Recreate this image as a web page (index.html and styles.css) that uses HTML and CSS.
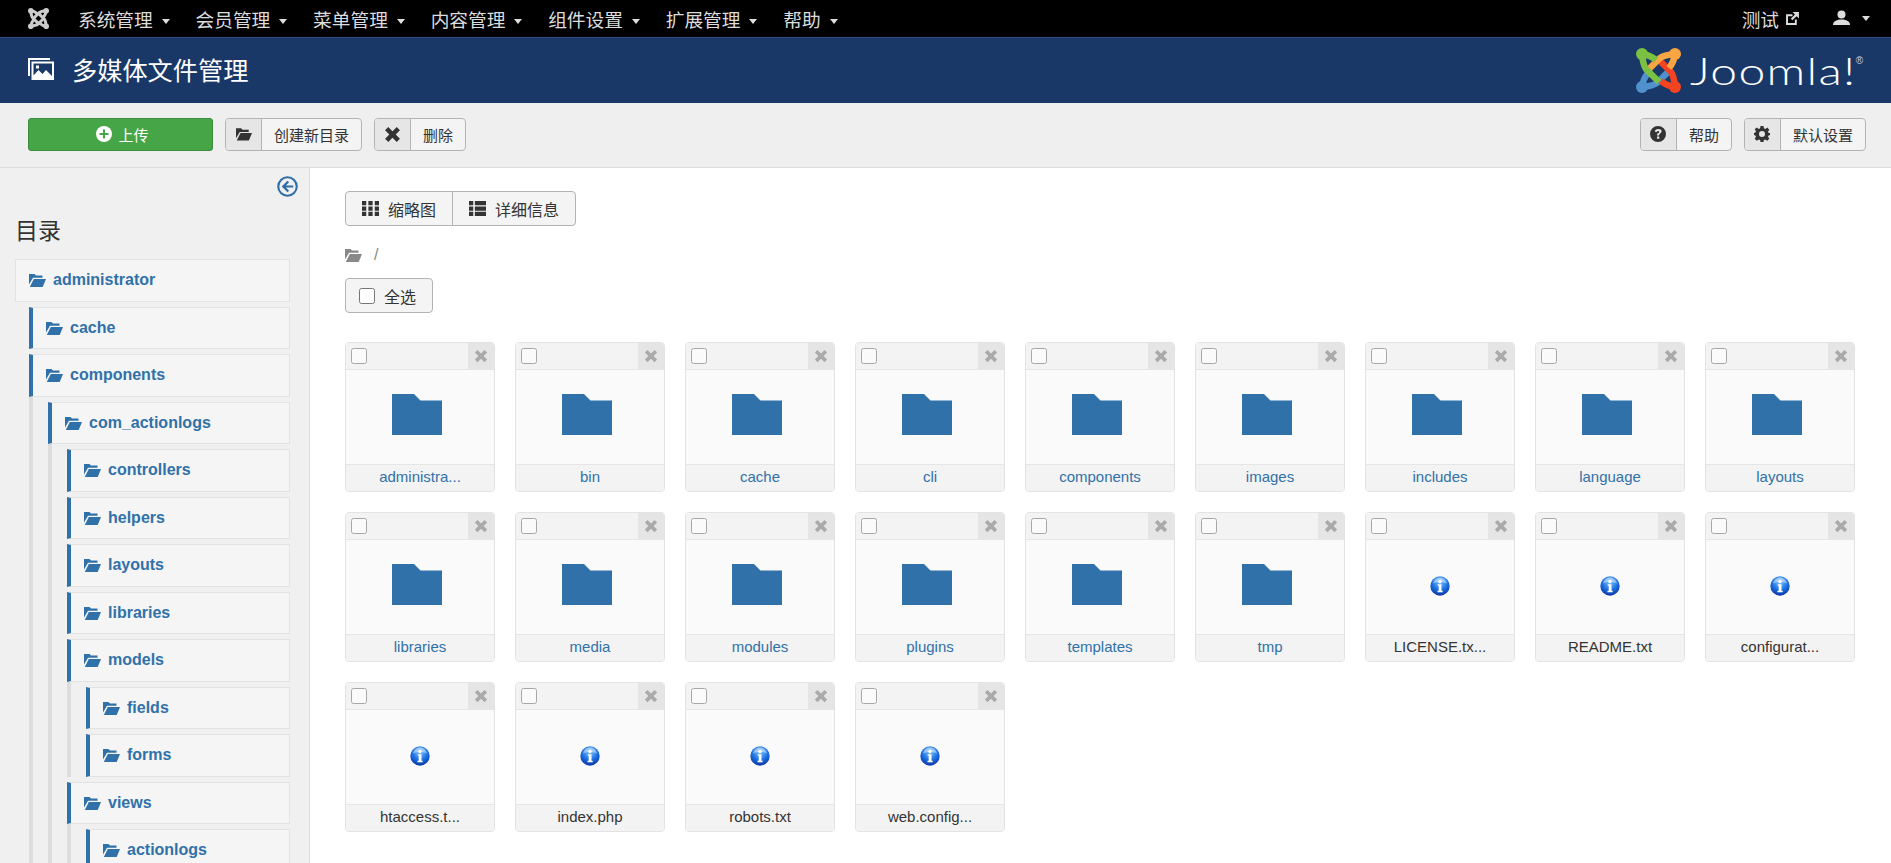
FILE: index.html
```html
<!DOCTYPE html>
<html>
  <head>
    <meta charset="utf-8" />
    <title>多媒体文件管理</title>
    <link rel="stylesheet" href="styles.css">
  </head>

  <body>
    <svg class="defs" width="0" height="0">
      <defs>
        <symbol id="i-folder-open" viewBox="0 0 17 14">
          <path d="M0 1h5.500l1.500 1.500h6.500v2.300H4L0 11.500z"/>
          <path d="M4.800 6H17l-3.300 8H.8z"/>
        </symbol>
        <symbol id="i-times" viewBox="0 0 16 16">
          <path d="M1 4l3-3 4 4 4-4 3 3-4 4 4 4-3 3-4-4-4 4-3-3 4-4z"/>
        </symbol>
        <symbol id="i-folder-big" viewBox="0 0 50 41">
          <path d="M0 0h22l6.500 6.500H50V41H0z"/>
        </symbol>
        <symbol id="i-joomla-arm" viewBox="0 0 45 45">
          <path d="M23 34L10 21Q7 17 6 6Q14 7 20 12" fill="none" stroke="currentColor" stroke-width="6.500"/>
          <circle cx="6" cy="6" r="6" fill="currentColor"/>
        </symbol>
        <radialGradient id="info-grad" cx="50%" cy="30%" r="75%">
          <stop offset="0" stop-color="#7cc4ff"/>
          <stop offset=".55" stop-color="#1a6fe0"/>
          <stop offset="1" stop-color="#0a2a9c"/>
        </radialGradient>
        <symbol id="i-info" viewBox="0 0 20 20">
          <circle cx="10" cy="10" r="9.700" fill="url(#info-grad)"/>
          <path d="M3 7.500C4 3.500 7 1.500 10 1.500s6 2 7 6c-4-2-10-2-14 0z" fill="#fff" opacity=".45"/>
          <circle cx="10" cy="5.500" r="1.700" fill="#fff"/>
          <path d="M7.800 8.300h3.700v6.500h1.200v1.400H7.500v-1.400h1.200V9.700h-.9z" fill="#fff"/>
        </symbol>
      </defs>
    </svg>

    <nav class="topbar">
      <svg class="nav-logo" viewBox="0 0 45 45">
        <use href="#i-joomla-arm"/>
        <use href="#i-joomla-arm" transform="rotate(90 22.500 22.500)"/>
        <use href="#i-joomla-arm" transform="rotate(180 22.500 22.500)"/>
        <use href="#i-joomla-arm" transform="rotate(270 22.500 22.500)"/>
      </svg>
      <ul class="menu">
        <li>系统管理<span class="caret"></span></li>
        <li>会员管理<span class="caret"></span></li>
        <li>菜单管理<span class="caret"></span></li>
        <li>内容管理<span class="caret"></span></li>
        <li>组件设置<span class="caret"></span></li>
        <li>扩展管理<span class="caret"></span></li>
        <li>帮助<span class="caret"></span></li>
      </ul>
      <div class="nav-right">
        <span class="site-link">测试
          <svg class="ext-icon" viewBox="0 0 14 14">
            <path d="M1 3h6v1.800H2.800v6.400h6.400V8H11v5H1z"/>
            <path d="M7 1h6v6l-2.200-2.200-3.900 3.900-1.500-1.500 3.900-3.900z"/>
          </svg>
        </span>
        <span class="user-link">
          <svg class="user-icon" viewBox="0 0 17 16">
            <circle cx="8.500" cy="4.500" r="4"/>
            <path d="M0 15c0-3.500 3-4.500 6-5.500h5c3 1 6 2 6 5.500z"/>
          </svg>
          <span class="caret"></span>
        </span>
      </div>
    </nav>

    <header class="titlebar">
      <svg class="title-icon" viewBox="0 0 26 22" fill="#fff">
        <path d="M0 0h22v2H2v16H0z"/>
        <path fill-rule="evenodd" d="M3.500 3.500H26V22H3.500zM5.500 5.500v12l5-5.500 4 4 3.500-4 6 6V5.500zM8 7.500h3v3H8z"/>
      </svg>
      <h1>多媒体文件管理</h1>
      <div class="brand">
        <svg class="brand-mark" viewBox="0 0 45 45">
          <use href="#i-joomla-arm" class="arm-blue" transform="rotate(270 22.500 22.500)"/>
          <use href="#i-joomla-arm" class="arm-red" transform="rotate(180 22.500 22.500)"/>
          <use href="#i-joomla-arm" class="arm-orange" transform="rotate(90 22.500 22.500)"/>
          <use href="#i-joomla-arm" class="arm-green"/>
        </svg>
        <span class="brand-name">Joomla!</span><span class="brand-reg">®</span>
      </div>
    </header>

    <div class="toolbar">
      <button class="btn-upload">
        <svg class="plus-icon" viewBox="0 0 16 16">
          <circle cx="8" cy="8" r="8" fill="#fff"/>
          <path d="M7 3.500h2V7h3.500v2H9v3.500H7V9H3.500V7H7z" fill="#46a546"/>
        </svg>
        上传
      </button>
      <button class="btn"><span class="btn-icon"><svg class="ico-folder"><use href="#i-folder-open"/></svg></span><span class="btn-text">创建新目录</span></button>
      <button class="btn"><span class="btn-icon"><svg class="ico-times"><use href="#i-times"/></svg></span><span class="btn-text">删除</span></button>
      <div class="toolbar-right">
        <button class="btn"><span class="btn-icon">
          <svg class="ico-help" viewBox="0 0 16 16">
            <path fill-rule="evenodd" d="M8 0a8 8 0 110 16A8 8 0 018 0zM7 10.500v2.300h2.300v-2.300zM8.200 3C6.300 3 5 4 4.800 5.800l2.100.3c.1-.8.500-1.200 1.200-1.200.7 0 1.100.4 1.100 1 0 .5-.3.800-.9 1.300C7.400 7 7 7.700 7 9.400h2.200c0-.9.200-1.200.9-1.800.9-.7 1.500-1.400 1.500-2.500C11.600 3.900 10.300 3 8.200 3z"/>
          </svg></span><span class="btn-text">帮助</span></button>
        <button class="btn"><span class="btn-icon">
          <svg class="ico-gear" viewBox="0 0 16 16">
            <path fill-rule="evenodd" d="M6.500 0h3l.4 2.300 1.300.6L13.200 1.600l2.100 2.100L14 5.700l.6 1.300L16 7v2l-1.400.4-.6 1.300 1.300 2-2.100 2.100-2-1.300-1.300.5L9.500 16h-3l-.4-2-1.300-.5-2 1.300L.7 12.700l1.300-2-.6-1.300L0 9V7l1.400-.4.600-1.300-1.300-2L2.800 1.600l2 1.300 1.300-.6zM8 5a3 3 0 100 6 3 3 0 000-6z"/>
          </svg></span><span class="btn-text">默认设置</span></button>
      </div>
    </div>

    <div class="page">
      <aside class="sidebar">
        <div class="collapse-row">
          <svg class="collapse-icon" viewBox="0 0 20 20">
            <circle cx="10" cy="10" r="8.800" fill="none" stroke="#2f6ea8" stroke-width="2"/>
            <path d="M10 4.500l1.500 1.500-3 3H15.500v2H8.500l3 3L10 15.500 4.500 10z" fill="#2f6ea8"/>
          </svg>
        </div>
        <h3 class="tree-title">目录</h3>
        <ul class="tree">
          <li>
            <a class="node node-root"><svg class="ico-node"><use href="#i-folder-open"/></svg>administrator</a>
            <ul class="tree sub-first">
              <li><a class="node"><svg class="ico-node"><use href="#i-folder-open"/></svg>cache</a></li>
              <li>
                <a class="node"><svg class="ico-node"><use href="#i-folder-open"/></svg>components</a>
                <ul class="tree sub">
                  <li>
                    <a class="node"><svg class="ico-node"><use href="#i-folder-open"/></svg>com_actionlogs</a>
                    <ul class="tree sub">
                      <li><a class="node"><svg class="ico-node"><use href="#i-folder-open"/></svg>controllers</a></li>
                      <li><a class="node"><svg class="ico-node"><use href="#i-folder-open"/></svg>helpers</a></li>
                      <li><a class="node"><svg class="ico-node"><use href="#i-folder-open"/></svg>layouts</a></li>
                      <li><a class="node"><svg class="ico-node"><use href="#i-folder-open"/></svg>libraries</a></li>
                      <li>
                        <a class="node"><svg class="ico-node"><use href="#i-folder-open"/></svg>models</a>
                        <ul class="tree sub">
                          <li><a class="node"><svg class="ico-node"><use href="#i-folder-open"/></svg>fields</a></li>
                          <li><a class="node"><svg class="ico-node"><use href="#i-folder-open"/></svg>forms</a></li>
                        </ul>
                      </li>
                      <li>
                        <a class="node"><svg class="ico-node"><use href="#i-folder-open"/></svg>views</a>
                        <ul class="tree sub">
                          <li><a class="node"><svg class="ico-node"><use href="#i-folder-open"/></svg>actionlogs</a></li>
                        </ul>
                      </li>
                    </ul>
                  </li>
                </ul>
              </li>
            </ul>
          </li>
        </ul>
      </aside>

      <main class="content">
        <div class="view-switch">
          <button class="view-btn">
            <svg class="ico-grid" viewBox="0 0 16 14">
              <path d="M0 0h4v4H0zM6 0h4v4H6zM12 0h4v4h-4zM0 5h4v4H0zM6 5h4v4H6zM12 5h4v4h-4zM0 10h4v4H0zM6 10h4v4H6zM12 10h4v4h-4z"/>
            </svg>
            缩略图
          </button>
          <button class="view-btn">
            <svg class="ico-grid" viewBox="0 0 16 14">
              <path d="M0 0h4v4H0zM5.500 0H16v4H5.500zM0 5h4v4H0zM5.500 5H16v4H5.500zM0 10h4v4H0zM5.500 10H16v4H5.500z"/>
            </svg>
            详细信息
          </button>
        </div>
        <div class="breadcrumb"><svg class="ico-crumb"><use href="#i-folder-open"/></svg><span>/</span></div>
        <label class="select-all"><input type="checkbox" /> 全选</label>

        <div class="cards">
          <div class="card"><div class="card-head"><input type="checkbox" /><span class="card-del"><svg><use href="#i-times"/></svg></span></div><div class="card-body"><svg class="big-folder"><use href="#i-folder-big"/></svg></div><div class="card-foot">administra...</div></div>
          <div class="card"><div class="card-head"><input type="checkbox" /><span class="card-del"><svg><use href="#i-times"/></svg></span></div><div class="card-body"><svg class="big-folder"><use href="#i-folder-big"/></svg></div><div class="card-foot">bin</div></div>
          <div class="card"><div class="card-head"><input type="checkbox" /><span class="card-del"><svg><use href="#i-times"/></svg></span></div><div class="card-body"><svg class="big-folder"><use href="#i-folder-big"/></svg></div><div class="card-foot">cache</div></div>
          <div class="card"><div class="card-head"><input type="checkbox" /><span class="card-del"><svg><use href="#i-times"/></svg></span></div><div class="card-body"><svg class="big-folder"><use href="#i-folder-big"/></svg></div><div class="card-foot">cli</div></div>
          <div class="card"><div class="card-head"><input type="checkbox" /><span class="card-del"><svg><use href="#i-times"/></svg></span></div><div class="card-body"><svg class="big-folder"><use href="#i-folder-big"/></svg></div><div class="card-foot">components</div></div>
          <div class="card"><div class="card-head"><input type="checkbox" /><span class="card-del"><svg><use href="#i-times"/></svg></span></div><div class="card-body"><svg class="big-folder"><use href="#i-folder-big"/></svg></div><div class="card-foot">images</div></div>
          <div class="card"><div class="card-head"><input type="checkbox" /><span class="card-del"><svg><use href="#i-times"/></svg></span></div><div class="card-body"><svg class="big-folder"><use href="#i-folder-big"/></svg></div><div class="card-foot">includes</div></div>
          <div class="card"><div class="card-head"><input type="checkbox" /><span class="card-del"><svg><use href="#i-times"/></svg></span></div><div class="card-body"><svg class="big-folder"><use href="#i-folder-big"/></svg></div><div class="card-foot">language</div></div>
          <div class="card"><div class="card-head"><input type="checkbox" /><span class="card-del"><svg><use href="#i-times"/></svg></span></div><div class="card-body"><svg class="big-folder"><use href="#i-folder-big"/></svg></div><div class="card-foot">layouts</div></div>
          <div class="card"><div class="card-head"><input type="checkbox" /><span class="card-del"><svg><use href="#i-times"/></svg></span></div><div class="card-body"><svg class="big-folder"><use href="#i-folder-big"/></svg></div><div class="card-foot">libraries</div></div>
          <div class="card"><div class="card-head"><input type="checkbox" /><span class="card-del"><svg><use href="#i-times"/></svg></span></div><div class="card-body"><svg class="big-folder"><use href="#i-folder-big"/></svg></div><div class="card-foot">media</div></div>
          <div class="card"><div class="card-head"><input type="checkbox" /><span class="card-del"><svg><use href="#i-times"/></svg></span></div><div class="card-body"><svg class="big-folder"><use href="#i-folder-big"/></svg></div><div class="card-foot">modules</div></div>
          <div class="card"><div class="card-head"><input type="checkbox" /><span class="card-del"><svg><use href="#i-times"/></svg></span></div><div class="card-body"><svg class="big-folder"><use href="#i-folder-big"/></svg></div><div class="card-foot">plugins</div></div>
          <div class="card"><div class="card-head"><input type="checkbox" /><span class="card-del"><svg><use href="#i-times"/></svg></span></div><div class="card-body"><svg class="big-folder"><use href="#i-folder-big"/></svg></div><div class="card-foot">templates</div></div>
          <div class="card"><div class="card-head"><input type="checkbox" /><span class="card-del"><svg><use href="#i-times"/></svg></span></div><div class="card-body"><svg class="big-folder"><use href="#i-folder-big"/></svg></div><div class="card-foot">tmp</div></div>
          <div class="card"><div class="card-head"><input type="checkbox" /><span class="card-del"><svg><use href="#i-times"/></svg></span></div><div class="card-body"><svg class="info-icon"><use href="#i-info"/></svg></div><div class="card-foot file">LICENSE.tx...</div></div>
          <div class="card"><div class="card-head"><input type="checkbox" /><span class="card-del"><svg><use href="#i-times"/></svg></span></div><div class="card-body"><svg class="info-icon"><use href="#i-info"/></svg></div><div class="card-foot file">README.txt</div></div>
          <div class="card"><div class="card-head"><input type="checkbox" /><span class="card-del"><svg><use href="#i-times"/></svg></span></div><div class="card-body"><svg class="info-icon"><use href="#i-info"/></svg></div><div class="card-foot file">configurat...</div></div>
          <div class="card"><div class="card-head"><input type="checkbox" /><span class="card-del"><svg><use href="#i-times"/></svg></span></div><div class="card-body"><svg class="info-icon"><use href="#i-info"/></svg></div><div class="card-foot file">htaccess.t...</div></div>
          <div class="card"><div class="card-head"><input type="checkbox" /><span class="card-del"><svg><use href="#i-times"/></svg></span></div><div class="card-body"><svg class="info-icon"><use href="#i-info"/></svg></div><div class="card-foot file">index.php</div></div>
          <div class="card"><div class="card-head"><input type="checkbox" /><span class="card-del"><svg><use href="#i-times"/></svg></span></div><div class="card-body"><svg class="info-icon"><use href="#i-info"/></svg></div><div class="card-foot file">robots.txt</div></div>
          <div class="card"><div class="card-head"><input type="checkbox" /><span class="card-del"><svg><use href="#i-times"/></svg></span></div><div class="card-body"><svg class="info-icon"><use href="#i-info"/></svg></div><div class="card-foot file">web.config...</div></div>
        </div>
      </main>
    </div>
  </body>
</html>
```

FILE: styles.css
```css
* {
  box-sizing: border-box;
}

html, body {
  height: 100%;
}

body {
  margin: 0;
  display: flex;
  flex-direction: column;
  overflow: hidden;
  font-family: "Liberation Sans", "Noto Sans CJK SC", sans-serif;
  font-size: 15px;
  color: #333;
  background: #fff;
}

ul {
  list-style: none;
  margin: 0;
  padding: 0;
}

button {
  font: inherit;
  color: inherit;
  padding: 0;
  cursor: pointer;
}

.defs {
  position: absolute;
}

.caret {
  display: inline-block;
  width: 0;
  height: 0;
  margin-left: 9px;
  vertical-align: middle;
  border-top: 5px solid #ddd;
  border-left: 4.500px solid transparent;
  border-right: 4.500px solid transparent;
}

/* barre du haut */
.topbar {
  height: 37px;
  flex: none;
  display: flex;
  align-items: center;
  padding: 0 21px 1px 28px;
  background: #000;
  color: #ddd;
  font-size: 18.700px;
}

.nav-logo {
  width: 21px;
  height: 21px;
  color: #ccc;
  margin-right: 29px;
}

.menu {
  display: flex;
  gap: 25.800px;
}

.menu li {
  white-space: nowrap;
}

.nav-right {
  margin-left: auto;
  display: flex;
  align-items: center;
  gap: 33px;
}

.site-link {
  display: flex;
  align-items: center;
  gap: 6px;
}

.ext-icon {
  width: 15px;
  height: 15px;
  fill: #ddd;
}

.user-link {
  display: flex;
  align-items: center;
}

.user-icon {
  width: 17px;
  height: 16px;
  fill: #ddd;
  margin-right: 3px;
}

/* titre */
.titlebar {
  height: 66px;
  flex: none;
  display: flex;
  align-items: center;
  padding: 0 28px 3px;
  background: #1a3867;
  border-top: 1px solid #2e4d7f;
  color: #fff;
}

.title-icon {
  width: 26px;
  height: 22px;
  margin-right: 18px;
}

.titlebar h1 {
  margin: 0;
  font-size: 25.200px;
  font-weight: 400;
}

.brand {
  margin-left: auto;
  margin-top: 3px;
  display: flex;
  align-items: center;
}

.brand-mark {
  width: 45px;
  height: 45px;
  margin-right: 9px;
}

.arm-green { color: #7ac143; }
.arm-orange { color: #f9a541; }
.arm-red { color: #f44321; }
.arm-blue { color: #5091cd; }

/* logo plus large que la police */
.brand-name {
  display: inline-block;
  width: 166px;
  font-family: Lato, sans-serif;
  font-weight: 300;
  font-size: 37px;
  letter-spacing: 1px;
  color: #fff;
  transform: scaleX(1.3);
  transform-origin: left center;
}

.brand-reg {
  font-size: 10px;
  align-self: flex-start;
  margin-top: 7px;
  color: #ccd;
}

/* barre d'outils */
.toolbar {
  height: 65px;
  flex: none;
  display: flex;
  align-items: center;
  gap: 12px;
  padding: 0 25px 2px 28px;
  background: #efefef;
  border-bottom: 1px solid #ddd;
}

.btn-upload {
  width: 185px;
  height: 33px;
  padding-left: 4px;
  background: #46a546;
  border: 1px solid #3b8f3b;
  border-radius: 3px;
  color: #fff;
  display: flex;
  align-items: center;
  justify-content: center;
  gap: 6px;
}

.plus-icon {
  width: 16px;
  height: 16px;
}

.btn {
  height: 33px;
  display: flex;
  align-items: stretch;
  background: #f4f4f4;
  border: 1px solid #b3b3b3;
  border-radius: 4px;
  overflow: hidden;
}

.btn-icon {
  width: 36px;
  display: flex;
  align-items: center;
  justify-content: center;
  background: #e6e6e6;
  border-right: 1px solid #b3b3b3;
}

.btn-text {
  display: flex;
  align-items: center;
  padding: 0 12px;
}

.btn svg {
  fill: #333;
}

.ico-folder {
  width: 16px;
  height: 14px;
}

.ico-times {
  width: 17px;
  height: 17px;
}

.ico-help,
.ico-gear {
  width: 16px;
  height: 16px;
}

.toolbar-right {
  margin-left: auto;
  display: flex;
  gap: 12px;
}

/* arbre des dossiers */
.page {
  flex: 1;
  min-height: 0;
  display: flex;
}

.sidebar {
  width: 310px;
  flex: none;
  padding: 8px 19px 0 15px;
  background: #f0f0f0;
  border-right: 1px solid #ddd;
  overflow: hidden;
}

.collapse-row {
  display: flex;
  justify-content: flex-end;
  margin-right: -8px;
}

.collapse-icon {
  width: 21px;
  height: 21px;
}

.tree-title {
  margin: 19px 0 13px;
  font-size: 23px;
  line-height: 30px;
  font-weight: 400;
}

.node {
  display: flex;
  align-items: center;
  height: 42.520px;
  margin-bottom: 5px;
  padding-left: 13px;
  background: #f5f5f5;
  border: 1px solid #e3e3e3;
  border-left: 4px solid #3071a9;
  color: #3071a9;
  font-weight: 700;
  font-size: 16px;
}

.node-root {
  border-left: 1px solid #e3e3e3;
}

.ico-node {
  width: 17px;
  height: 14px;
  fill: #3071a9;
  margin-right: 7px;
  flex: none;
}

.sub-first {
  padding-left: 14px;
}

.sub {
  border-left: 4px solid #ddd;
  padding-left: 15px;
  margin-top: -5px;
  padding-top: 5px;
}

/* contenu */
.content {
  flex: 1;
  min-width: 0;
  padding: 23px 16px 0 35px;
  overflow: hidden;
}

.view-switch {
  display: inline-flex;
  vertical-align: top;
  height: 35px;
  border: 1px solid #b3b3b3;
  border-radius: 4px;
  background: #f4f4f4;
  font-size: 16px;
}

.view-btn {
  display: flex;
  align-items: center;
  gap: 9px;
  padding: 0 16px;
  border: 0;
  background: transparent;
}

.view-btn + .view-btn {
  border-left: 1px solid #b3b3b3;
}

.ico-grid {
  width: 17px;
  height: 15px;
  fill: #333;
}

.breadcrumb {
  display: flex;
  align-items: center;
  height: 20px;
  margin-top: 19px;
  color: #888;
  font-size: 16px;
}

.ico-crumb {
  width: 17px;
  height: 14px;
  fill: #888;
  margin-right: 12px;
}

.select-all {
  width: 88px;
  height: 35px;
  margin-top: 13px;
  display: flex;
  align-items: center;
  gap: 9px;
  padding-left: 13px;
  border: 1px solid #b3b3b3;
  border-radius: 4px;
  background: #f4f4f4;
  font-size: 16px;
}

input[type="checkbox"] {
  width: 16px;
  height: 16px;
  margin: 0;
  flex: none;
}

.cards {
  display: flex;
  flex-wrap: wrap;
  gap: 20px;
  margin-top: 29px;
}

.card {
  width: 150px;
  height: 150px;
  display: flex;
  flex-direction: column;
  border: 1px solid #e3e3e3;
  border-radius: 4px;
  overflow: hidden;
  background: #fafafa;
}

.card-head {
  height: 27px;
  flex: none;
  display: flex;
  align-items: center;
  justify-content: space-between;
  padding-left: 5px;
  background: #f3f3f3;
  border-bottom: 1px solid #e6e6e6;
}

.card-head input {
  opacity: 0.6;
}

.card-del {
  width: 26px;
  height: 100%;
  display: flex;
  align-items: center;
  justify-content: center;
  background: #e5e5e5;
}

.card-del svg {
  width: 14px;
  height: 14px;
  fill: #aaa;
}

.card-body {
  flex: 1;
  display: flex;
  align-items: center;
  justify-content: center;
}

.big-folder {
  width: 50px;
  height: 41px;
  margin: 0 7px 5px 0;
  fill: #3071a9;
}

.info-icon {
  width: 20px;
  height: 20px;
  margin-bottom: 2px;
}

.card-foot {
  height: 27px;
  flex: none;
  text-align: center;
  line-height: 23px;
  font-size: 15px;
  color: #3071a9;
  background: #f3f3f3;
  border-top: 1px solid #e6e6e6;
}

.card-foot.file {
  color: #333;
}
```
